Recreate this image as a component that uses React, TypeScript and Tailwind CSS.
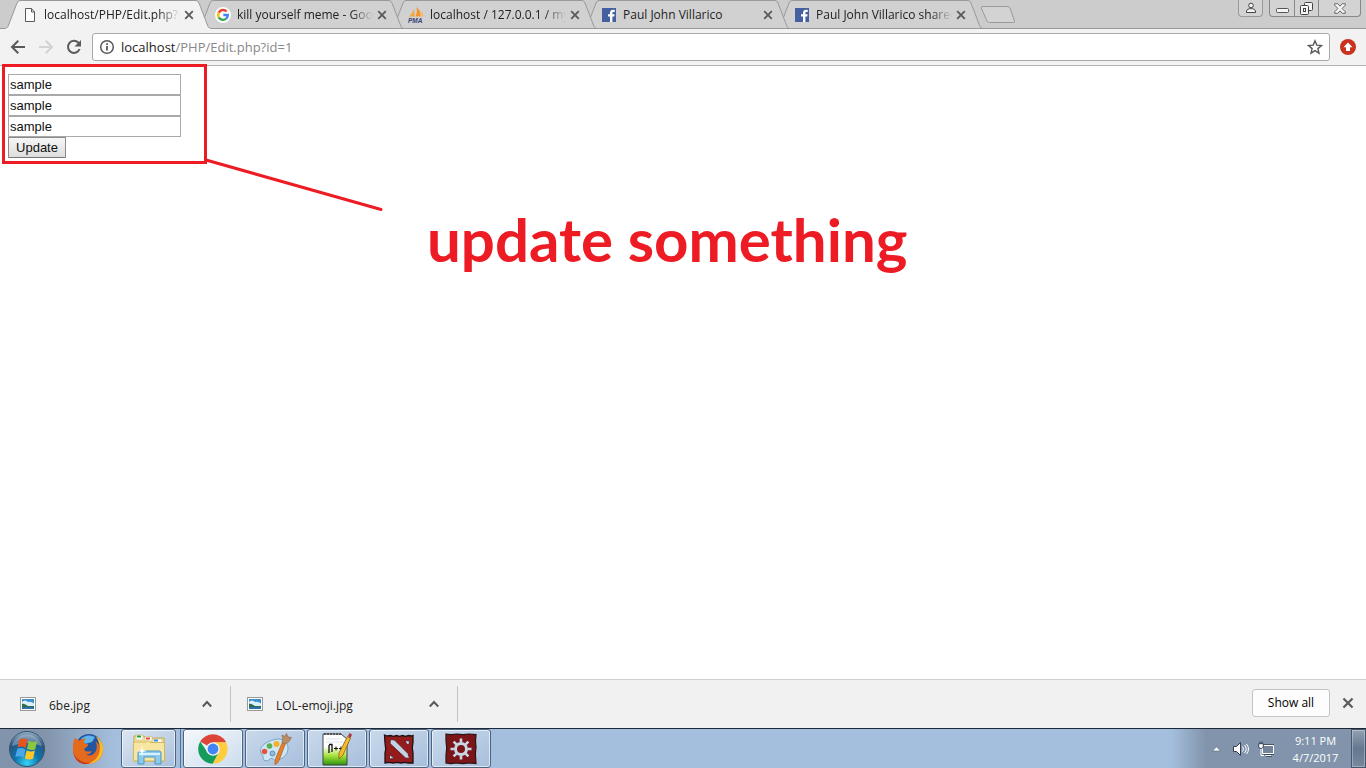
import type { ReactNode } from 'react';

const uiFont = "font-['Open_Sans','Noto_Sans',sans-serif]";

function PageIcon() {
  return (
    <svg width="16" height="16" viewBox="0 0 16 16" fill="#fff" stroke="#5a5a5a">
      <path d="M3.500 1.500h6l3 3.500v9.500h-9z" />
      <path d="M9.500 1.500v3.500h3" fill="none" />
    </svg>
  );
}

function GoogleIcon() {
  return (
    <svg width="16" height="16" viewBox="0 0 16 16">
      <circle cx="8" cy="8" r="8" fill="#fff" />
      <g fill="none" strokeWidth="2.400">
        <path d="M11.600 4.500A4.900 4.900 0 0 0 3.700 5.700" stroke="#ea4335" />
        <path d="M3.700 5.700a4.900 4.900 0 0 0 0 4.700" stroke="#fbbc05" />
        <path d="M3.700 10.400a4.900 4.900 0 0 0 7.600 1.100" stroke="#34a853" />
        <path d="M11.300 11.500A4.600 4.600 0 0 0 12.800 8H8.300" stroke="#4285f4" />
      </g>
    </svg>
  );
}

function PmaIcon() {
  return (
    <svg width="16" height="16" viewBox="0 0 16 16">
      <path d="M5.800 1.500L6.800 9.500H.8C3.300 8 5.200 5 5.800 1.500z" fill="#f9a53b" />
      <path d="M8.500 0c3 2.500 4.500 6 4 9.500H7.600C9 6.500 9.200 3 8.500 0z" fill="#f7931e" />
      <path d="M12 3c2 1.700 3.300 4 3.500 6.500h-2.300C13.500 7 13 5 12 3z" fill="#fbb667" />
      <text x="0" y="15.500" fontSize="6.500" fontWeight="bold" fontStyle="italic" fontFamily="Liberation Sans, sans-serif" fill="#3b3f77">PMA</text>
    </svg>
  );
}

function FacebookIcon() {
  return (
    <svg width="16" height="16" viewBox="0 0 16 16">
      <rect x="1" y="1" width="14" height="14" fill="#4460a0" />
      <path d="M9 15V9.500H7V7.300h2V5.800C9 3.800 10.200 2.800 12 2.800h1.700v2.100h-1.300c-.8 0-1 .4-1 1.100v1.300h2.200l-.3 2.200h-1.900V15z" fill="#fff" />
    </svg>
  );
}

function Cross({ size }: { size: number }) {
  return (
    <svg width={size} height={size} viewBox="0 0 10 10" stroke="#5a5a5a" strokeWidth="1.800">
      <path d="M1.200 1.200l7.600 7.600M8.800 1.200L1.200 8.800" />
    </svg>
  );
}

type TabInfo = { title: string; icon: ReactNode; layer: string; active?: boolean; fade?: boolean };

const tabs: TabInfo[] = [
  { title: 'localhost/PHP/Edit.php?i', icon: <PageIcon />, layer: 'z-50', active: true, fade: true },
  { title: 'kill yourself meme - Goo', icon: <GoogleIcon />, layer: 'z-40', fade: true },
  { title: 'localhost / 127.0.0.1 / my', icon: <PmaIcon />, layer: 'z-30', fade: true },
  { title: 'Paul John Villarico', icon: <FacebookIcon />, layer: 'z-20' },
  { title: 'Paul John Villarico shared', icon: <FacebookIcon />, layer: 'z-10', fade: true },
];

function Tab({ title, icon, layer, active, fade }: TabInfo) {
  return (
    <div className={`relative flex h-[29px] w-[193px] items-center pl-[17px] ${layer}`}>
      <svg className="absolute top-0 left-0" width="207" height="29" viewBox="0 0 207 29">
        <path
          d="M0 28.500C2 28.500 2.500 27.500 3 26.500L12 3Q13 .5 15 .5H191Q193 .5 194 3L203 26.500Q204 28.500 206 28.500"
          fill={active ? '#f2f2f2' : '#d1d1d1'}
          stroke="#999"
        />
        {active ? <path d="M1 28.500H205" stroke="#f2f2f2" /> : <path d="M0 28.500H207" stroke="#999" />}
      </svg>
      <button type="button" className="relative flex items-center gap-[6px]">
        <span className="w-4">{icon}</span>
        <span
          className={`w-[136px] overflow-hidden text-left text-[12px] leading-4 whitespace-nowrap text-[#222] ${
            fade ? '[mask-image:linear-gradient(to_right,#000_84%,transparent)]' : ''
          }`}
        >
          {title}
        </span>
      </button>
      <button type="button" aria-label={`Close ${title}`} className="relative ml-1 flex">
        <Cross size={10} />
      </button>
    </div>
  );
}

function WindowControls() {
  return (
    <div className="ml-auto flex gap-[6px] pr-[5px]">
      <button type="button" aria-label="Profile" className="flex h-[17px] w-[25px] items-center justify-center rounded-b border border-t-0 border-[#999] bg-[#d3d3d3]">
        <svg width="12" height="12" viewBox="0 0 12 12" fill="#f5f5f5" stroke="#444">
          <circle cx="6" cy="3.500" r="2.300" />
          <path d="M1.500 10.500V9q.5-2 3-2.300h3q2.500.3 3 2.300v1.500z" />
        </svg>
      </button>
      <div className="flex h-[17px] rounded-b border border-t-0 border-[#888] bg-[#d3d3d3]">
        <button type="button" aria-label="Minimize" className="flex w-6 items-center justify-center pt-1">
          <svg width="13" height="12" viewBox="0 0 13 12">
            <rect x=".5" y="4.500" width="12" height="4" rx="1" fill="#f5f5f5" stroke="#555" />
          </svg>
        </button>
        <button type="button" aria-label="Restore" className="flex w-[25px] items-center justify-center border-x border-[#888]">
          <svg width="13" height="13" viewBox="0 0 13 13" fill="#f5f5f5" stroke="#444">
            <rect x="4.500" y=".5" width="8" height="8" rx="1" />
            <rect x=".5" y="3.500" width="8" height="9" rx="1" />
            <rect x="3.500" y="6.500" width="2" height="3" />
          </svg>
        </button>
        <button type="button" aria-label="Close window" className="flex w-[41px] items-center justify-center">
          <svg width="12" height="11" viewBox="0 0 12 11" fill="#f5f5f5" stroke="#666">
            <path d="M.7.7h3L6 3.200 8.300.7h3v1.500L8 5.500l3.300 3.300v1.500h-3L6 7.800l-2.300 2.500h-3V8.800L4 5.500.7 2.200z" />
          </svg>
        </button>
      </div>
    </div>
  );
}

function Toolbar() {
  return (
    <div className="flex h-[37px] items-center border-b border-[#b3b3b3] bg-[#f2f2f2] pr-[9px] pl-[10px]">
      <div className="flex w-[82px] gap-3">
        <button type="button" aria-label="Back">
          <svg width="16" height="16" viewBox="0 0 16 16" fill="none" stroke="#5a5a5a" strokeWidth="2">
            <path d="M15 8H2.500M8.300 1.800L2 8l6.300 6.200" />
          </svg>
        </button>
        <button type="button" aria-label="Forward" disabled>
          <svg width="16" height="16" viewBox="0 0 16 16" fill="none" stroke="#d3d3d3" strokeWidth="2">
            <path d="M1 8h12.500M7.700 1.800L14 8l-6.300 6.200" />
          </svg>
        </button>
        <button type="button" aria-label="Reload">
          <svg width="16" height="16" viewBox="0 0 16 16" fill="none" stroke="#5a5a5a" strokeWidth="2">
            <path d="M13.600 10A6 6 0 1 1 12.400 3.800L14 5.500" />
            <path d="M15 1v6.500H8.500z" fill="#5a5a5a" stroke="none" />
          </svg>
        </button>
      </div>
      <div className="flex h-7 flex-1 items-center rounded-[3px] border border-[#a9a9a9] bg-white px-[6px]">
        <svg width="16" height="16" viewBox="0 0 16 16" fill="none" stroke="#5a5a5a" strokeWidth="1.500">
          <circle cx="8" cy="8" r="6.300" />
          <path d="M8 7v4.500M8 4.200v1.700" strokeWidth="1.800" />
        </svg>
        <a href="#address" className="ml-[6px] text-[13px] leading-5 text-[#888]">
          <span className="text-[#222]">localhost</span>/PHP/Edit.php?id=1
        </a>
        <button type="button" aria-label="Bookmark this page" className="ml-auto">
          <svg width="16" height="16" viewBox="0 0 16 16" fill="none" stroke="#5a5a5a" strokeWidth="1.400">
            <path d="M8 1.800l1.800 4.300 4.700.4-3.600 3.100 1.100 4.600L8 11.700l-4 2.500 1.100-4.600L1.500 6.500l4.700-.4z" />
          </svg>
        </button>
      </div>
      <button type="button" aria-label="Update available" className="ml-[9px]">
        <svg width="18" height="18" viewBox="0 0 18 18">
          <circle cx="9" cy="9" r="8" fill="#c8321f" />
          <path d="M9 4.500l4.500 4.700H11V13H7V9.200H4.500z" fill="#fff" />
        </svg>
      </button>
    </div>
  );
}

function Page() {
  return (
    <main className="relative flex-1 bg-white p-2">
      <form className="flex flex-col items-start font-['Liberation_Sans',Arial,sans-serif] text-[13px] text-[#111]" onSubmit={(e) => e.preventDefault()}>
        {['First field', 'Second field', 'Third field'].map((label) => (
          <input key={label} aria-label={label} defaultValue="sample" className="h-[21px] w-[173px] border border-[#a9a9a9] px-px leading-4 outline-none" />
        ))}
        <button type="submit" className="h-[21px] w-[58px] rounded-[1px] border border-[#8a8a8a] border-b-[#777] bg-linear-to-b from-[#f6f6f6] to-[#dddddd] leading-4">
          Update
        </button>
      </form>
      <svg className="pointer-events-none absolute -top-[2px] left-0 z-10" width="400" height="160" viewBox="0 0 400 160" fill="none" stroke="#ed1c24" strokeWidth="3">
        <rect x="3.500" y="1.500" width="202" height="97" />
        <path d="M206 96L381 145.500" strokeLinecap="round" />
      </svg>
      <p className="pointer-events-none absolute top-[137px] left-[427px] font-['Lato',sans-serif] text-[60px] leading-[72px] font-bold whitespace-nowrap text-[#ed1c24]">
        update something
      </p>
    </main>
  );
}

function DownloadItem({ name }: { name: string }) {
  return (
    <div className="flex h-9 items-center border-r border-[#c4c4c4] pr-[18px] pl-4">
      <button type="button" className="flex items-center">
        <svg width="16" height="14" viewBox="0 0 16 14">
          <rect x=".5" y=".5" width="15" height="13" fill="#fff" stroke="#999" />
          <rect x="2" y="2" width="12" height="10" fill="#3f8fcb" />
          <path d="M2 5q3-3 6 0 3-1 6 1.500v3H2z" fill="#d9effa" />
          <path d="M2 6.500q3 0 6 2.500h6v1H2z" fill="#2e6b4a" />
          <path d="M2 10h12v2H2z" fill="#2a72a8" />
        </svg>
        <span className="ml-[13px] w-[153px] pt-1 text-left text-[12px] leading-4 text-[#222]">{name}</span>
      </button>
      <button type="button" aria-label={`Options for ${name}`}>
        <svg width="10" height="8" viewBox="0 0 10 8" fill="none" stroke="#5a5a5a" strokeWidth="2">
          <path d="M.8 6.500L5 2l4.200 4.500" />
        </svg>
      </button>
    </div>
  );
}

function DownloadBar() {
  return (
    <div className="flex h-[49px] items-center border-t border-[#d0d0d0] bg-[#f1f1f1] pr-3 pl-1">
      <DownloadItem name="6be.jpg" />
      <DownloadItem name="LOL-emoji.jpg" />
      <button type="button" className="mb-[2px] ml-auto h-7 w-[78px] rounded-[3px] border border-[#c4c4c4] bg-[#fdfdfd] text-[12px] leading-4 text-black">
        Show all
      </button>
      <button type="button" aria-label="Close downloads" className="mb-[2px] ml-3">
        <Cross size={12} />
      </button>
    </div>
  );
}

function StartOrb() {
  return (
    <svg width="36" height="36" viewBox="0 0 36 36">
      <defs>
        <radialGradient id="orb" cx=".5" cy=".9" r=".9">
          <stop offset="0" stopColor="#36d3f5" />
          <stop offset=".4" stopColor="#0c73ab" />
          <stop offset=".75" stopColor="#2b5680" />
          <stop offset="1" stopColor="#9bb5c9" />
        </radialGradient>
      </defs>
      <circle cx="18" cy="18" r="17.500" fill="url(#orb)" stroke="#35516f" />
      <path d="M3 15a15.500 15.500 0 0 1 30 0Q18 9 3 15z" fill="#fff" opacity=".3" />
      <path d="M10.500 8.500q4-2 8 .5l-1.800 8q-4-2.500-8.200-.5z" fill="#e8541e" />
      <path d="M19.800 9.700q4 2.300 8.400.3l-2 8.200q-4 2-8.200-.5z" fill="#8cc63e" />
      <path d="M8.200 18q4-2 8.200.5l-1.900 8q-4-2.300-8.200-.4z" fill="#4aa8e8" />
      <path d="M17.700 19.200q4 2.300 8.200.4l-1.900 8.200q-4 1.800-8.200-.5z" fill="#ffc628" />
    </svg>
  );
}

function FirefoxIcon() {
  return (
    <svg width="32" height="32" viewBox="0 0 32 32">
      <circle cx="17" cy="14.500" r="13.500" fill="#2455a0" />
      <path d="M9 6q6-6 14-2l-3 5-7 2z" fill="#5fb4ea" />
      <path d="M2.500 5L7 7.500Q10 5.500 14 5.500 11.500 8 12 10.500l4 .8q.8 1.700-3.600 4.200-.4 2.500 2.600 3 2.500.3 5-.5-2 3.500-6 3.500 5.500 2.500 9-2 3.500-5 .5-11 4 2 4.500 8 .5-8-4-13.500Q30.500 9 31 17 30 29 17 31 4 30.500 1 19 .3 11 2.500 5z" fill="#e66a1c" />
      <path d="M24 3.500c6 3.500 9 11 6 18C27 28 22 30.500 16 31c6-3 10-6 11.500-12 1-5.500-.5-11-3.500-15.500z" fill="#fbbb24" />
      <path d="M1 17q1 8 9 11.500 5 2 9 1-7 3.500-12.500-.5Q1.500 25 1 17z" fill="#c93a1c" />
    </svg>
  );
}

function ExplorerIcon() {
  return (
    <svg width="34" height="32" viewBox="0 0 34 32">
      <path d="M2 3h10l1 2h19v23H2z" fill="#f7e6a0" stroke="#c6a64e" />
      <path d="M4 2h7v5H4zM13 3.500h7V8h-7zM21 6h9v4h-9z" fill="#fff" stroke="#ccb56c" strokeWidth=".6" />
      <path d="M5 2.500h4v2H5z" fill="#17a62c" />
      <path d="M14 4.500h4v2h-4z" fill="#de4b33" />
      <path d="M22 6.500h4v2h-4z" fill="#398be0" />
      <path d="M1.500 9H14l2-1.500 2 2h14.500V28h-31z" fill="#f6e6a2" stroke="#d4b65d" />
      <path d="M6 31V20q0-2 2-2h19q2 0 2 2v11h-6v-7H12v7z" fill="#8ccaea" stroke="#4b98c5" />
      <path d="M7 20h21v2H7z" fill="#d6f1fb" />
      <path d="M10 12l.8 5 4.200 1-4.200 1-.8 5-.8-5L5 18l4.200-1z" fill="#fff" />
    </svg>
  );
}

function ChromeIcon() {
  return (
    <svg width="30" height="30" viewBox="0 0 30 30">
      <path d="M15 15L2.200 7.600A14.800 14.800 0 0 1 27.800 7.600L28 8.500H15z" fill="#dc4537" />
      <path d="M28 8.200A14.800 14.800 0 0 1 14.800 29.800L20.600 18.200 15 8.200z" fill="#ffcd40" />
      <path d="M2.200 7.500A14.800 14.800 0 0 0 14.700 29.800L20.600 18.300 9.400 18.200z" fill="#149d5a" />
      <circle cx="15" cy="15" r="6.800" fill="#f4f4f4" />
      <circle cx="15" cy="15" r="5.400" fill="#4285f4" />
    </svg>
  );
}

function PaintIcon() {
  return (
    <svg width="34" height="32" viewBox="0 0 34 32">
      <path d="M15 7c8-3 15 1 15 8 0 6-4 10-10 12-4 1.500-4-2-7-1.500-2 .3-2 3-6 2-3-.8-1-4-2.500-5.500C-1 17 5 9.500 15 7z" fill="#cfe6f5" stroke="#6fa6cc" />
      <circle cx="6.500" cy="18.500" r="2.800" fill="#e5533d" />
      <circle cx="11.500" cy="13" r="2.800" fill="#57b04b" />
      <circle cx="18.500" cy="11" r="3" fill="#f3b32d" />
      <circle cx="14.500" cy="20.500" r="2.500" fill="#8ebbe0" stroke="#5d90bb" />
      <path d="M24.500 9l3 1.500L22 25q-2 6-5 6.500-.5-3 1-7z" fill="#e87f2c" stroke="#a95e20" strokeWidth=".7" />
      <path d="M24 9.500Q25.500 5 24 2l3 1.500L28.500.5 30 4l3.500.5Q31 9.500 27.500 11z" fill="#b98c63" stroke="#8f6c4c" strokeWidth=".7" />
    </svg>
  );
}

function NotepadIcon() {
  return (
    <svg width="30" height="34" viewBox="0 0 30 34">
      <defs>
        <linearGradient id="np" x1="0" y1="0" x2="0" y2="1">
          <stop offset=".4" stopColor="#fff" />
          <stop offset=".7" stopColor="#a6e23c" />
          <stop offset="1" stopColor="#2a960f" />
        </linearGradient>
      </defs>
      <path d="M1 2h18l6 5v26H1z" fill="url(#np)" stroke="#444" />
      <path d="M2 2h17" stroke="#555" strokeWidth="2" strokeDasharray="2 1" />
      <path d="M4 7h14M4 10h18" stroke="#ccd8e4" strokeWidth=".7" />
      <path d="M7 21V13M7 12.500h3V20" stroke="#111" strokeWidth="1.300" fill="none" />
      <path d="M12 16.500h4M14 14.500v4M17 16.500h4M19 14.500v4" stroke="#111" fill="none" />
      <path d="M25.500 4.500l3 1.500-7.500 17-4 4v-6z" fill="#f4bd2f" stroke="#8c5c13" strokeWidth=".8" />
      <path d="M26 4l1.500-3L30 2.500 28.500 6z" fill="#ad3541" />
    </svg>
  );
}

function DotaIcon() {
  return (
    <svg width="32" height="32" viewBox="0 0 32 32">
      <path d="M1.500 2l3 1 3-.5 3 .8 3-.8 3 .8 3-.8 3 .8 3-.8 3 .5 1.500-.5v7l-.7 5 .7 6v9.500h-5l-3-.7-4 .7-4-.7-4 .7-4-.7-4 .7V20l.7-4-.7-6z" fill="#941c1d" stroke="#1d1113" strokeWidth="1.300" />
      <path d="M7.500 6.500l4 .5L25 20.500l1.500 5-4-.5L7 10.500z" fill="#c3d3e4" stroke="#5b1216" strokeWidth=".8" />
      <path d="M22 8l4-.5.5 3.500-2.500.5zM6.500 21.500l5 4-5 .5z" fill="#c3d3e4" stroke="#5b1216" strokeWidth=".8" />
    </svg>
  );
}

function GearTileIcon() {
  return (
    <svg width="32" height="32" viewBox="0 0 32 32">
      <path d="M1 1l5 .6L12 1l6 .6L24 1l7 .6-.5 6.400.5 6-.6 7 .6 9.500-7-.5-6 .6-7-.6-5 .6L1 30v-8l.7-7L1 8z" fill="#7b1518" stroke="#2a1316" strokeWidth="1.200" />
      <g stroke="#c9d8e6" fill="none">
        <circle cx="16" cy="16" r="5.500" strokeWidth="3" />
        <path d="M16 5.500v4M16 22.500v4M5.500 16h4M22.500 16h4M8.600 8.600l2.800 2.800M20.600 20.600l2.800 2.800M8.600 23.400l2.800-2.800M20.600 11.400l2.800-2.800" strokeWidth="2.600" />
      </g>
    </svg>
  );
}

const apps: { name: string; icon: ReactNode; tone: string }[] = [
  { name: 'Google Chrome', icon: <ChromeIcon />, tone: 'from-[#f5f8fc] to-[#cbdced]' },
  { name: 'Paint', icon: <PaintIcon />, tone: 'from-[#c9d9eb] to-[#a7bfdc]' },
  { name: 'Notepad++', icon: <NotepadIcon />, tone: 'from-[#c9d9eb] to-[#a7bfdc]' },
  { name: 'Dota 2', icon: <DotaIcon />, tone: 'from-[#c9d9eb] to-[#a7bfdc]' },
  { name: 'Settings', icon: <GearTileIcon />, tone: 'from-[#c9d9eb] to-[#a7bfdc]' },
];

function Taskbar() {
  return (
    <footer className="flex h-10 items-stretch border-t border-[#1c2838] bg-[linear-gradient(to_right,#8294ab_0,#8294ab_45px,#a4bfde_115px,#a4bfde_calc(100%_-_195px),#8294ab_calc(100%_-_160px))]">
      <button type="button" aria-label="Start" className="flex w-[54px] items-center justify-center">
        <StartOrb />
      </button>
      <button type="button" aria-label="Firefox" className="flex w-[67px] items-center justify-center">
        <FirefoxIcon />
      </button>
      <div className="flex gap-[2px]">
        <div className="flex w-[60px] border-r border-[#56708e]">
          <button type="button" aria-label="File Explorer" className="flex w-[55px] items-center justify-center rounded-[3px] border border-[#4d6480] bg-linear-to-br from-[#dce6f1] to-[#a9c1dd] inset-ring inset-ring-white/60">
            <ExplorerIcon />
          </button>
        </div>
        {apps.map((app) => (
          <button
            key={app.name}
            type="button"
            aria-label={app.name}
            className={`flex w-[60px] items-center justify-center rounded-[3px] border border-[#4d6480] bg-linear-to-br inset-ring inset-ring-white/60 ${app.tone}`}
          >
            {app.icon}
          </button>
        ))}
      </div>
      <div className="ml-auto flex items-center">
        <button type="button" aria-label="Show hidden icons" className="mr-3">
          <svg width="9" height="6" viewBox="0 0 9 6">
            <path d="M.5 5L4.500.8 8.500 5z" fill="#fff" stroke="#52647b" strokeWidth=".6" />
          </svg>
        </button>
        <button type="button" aria-label="Volume" className="mr-[9px]">
          <svg width="16" height="16" viewBox="0 0 16 16">
            <path d="M.5 5.500h3l4-4v13l-4-4h-3z" fill="#fff" stroke="#333f50" />
            <path d="M9.500 5.500q2 2.500 0 5M11.500 4q3.500 4 0 8M13.500 3q4 5 0 10" fill="none" stroke="#fff" />
          </svg>
        </button>
        <button type="button" aria-label="Network" className="mr-[18px]">
          <svg width="16" height="16" viewBox="0 0 16 16">
            <path d="M4.500 4.500h11v8h-11zM8 14.500h6" fill="#71849c" stroke="#333f50" strokeWidth="2.500" />
            <path d="M4.500 4.500h11v8h-11zM7.500 14.500h6M3 6v8.500h3" fill="#71849c" stroke="#fff" />
            <path d="M.7 2.700h4.600v3.600l-1.500 1H2.200l-1.500-1zM2 .5v2M4 .5v2" fill="#fff" stroke="#333f50" />
          </svg>
        </button>
        <div className="mr-3 w-[47px] text-center text-[11px] leading-[17px] whitespace-nowrap text-white">
          <div>9:11 PM</div>
          <div>4/7/2017</div>
        </div>
        <button type="button" aria-label="Show desktop" className="h-full w-[15px] border border-[#45566c] bg-linear-to-b from-[#93a2b4] via-[#64778e] to-[#76899f] inset-ring inset-ring-white/30" />
      </div>
    </footer>
  );
}

export default function App() {
  return (
    <div className={`flex min-h-screen flex-col ${uiFont}`}>
      <header>
        <div className="flex h-[29px] border-b border-[#999] bg-[#ccc] pl-[5px]">
          {tabs.map((tab) => (
            <Tab key={tab.title} {...tab} />
          ))}
          <button type="button" aria-label="New tab" className="ml-[10px] flex items-center pt-[2px]">
            <svg width="36" height="18" viewBox="0 0 36 18">
              <path d="M3 .5H27.500Q29 .5 30 2L34.500 15Q35 16.500 33.500 16.500H9.500Q8 16.500 7 15L1.200 2Q1 .5 3 .5z" fill="#d3d3d3" stroke="#999" />
            </svg>
          </button>
          <WindowControls />
        </div>
        <Toolbar />
      </header>
      <Page />
      <DownloadBar />
      <Taskbar />
    </div>
  );
}
